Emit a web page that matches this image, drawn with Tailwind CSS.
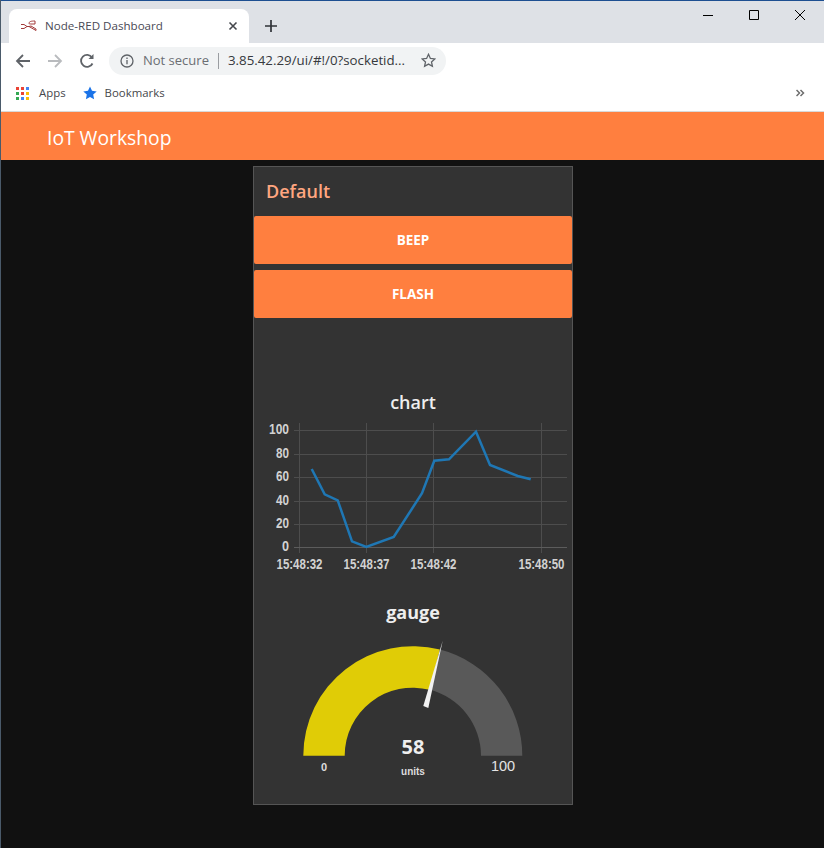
<!DOCTYPE html>
<html lang="en">
<head>
    <meta charset="UTF-8">
    <meta name="viewport" content="width=device-width, initial-scale=1.0">
    <title>Node-RED Dashboard</title>
    <script src="https://cdn.jsdelivr.net/npm/@tailwindcss/browser@4"></script>
</head>
<body class="bg-[#111111] font-['Open_Sans','Noto_Sans',sans-serif]">
<div class="w-[824px] h-[848px] flex flex-col overflow-hidden border-l border-[#4a5a6a]">

    <!-- Browser tabs -->
    <div class="h-[43px] shrink-0 bg-[#dee1e6] border-t border-[#1d4f91] flex items-end pl-[8px]">
        <div class="w-[240px] h-[34px] bg-white rounded-t-[8px] flex items-center pl-[12px] pr-[11px]">
            <svg class="w-[16px] h-[12px] shrink-0" viewBox="0 0 16 12" fill="none" stroke="#a33a3a" stroke-width="1">
                <path d="M0 4.500h3l3 2h2M0 8.500h3l3-2M8 3.500c0-2 2-2.500 6-2.500v3h-4c-1 0-2-.200-2-.500zM8 6.500l7 4v-1.500l-5-3z"/>
            </svg>
            <span class="ml-[8px] text-[11.6px] text-[#4a4a55] whitespace-nowrap">Node-RED Dashboard</span>
            <svg class="ml-auto w-[10px] h-[10px]" viewBox="0 0 10 10" stroke="#45484d" stroke-width="1.600"><path d="M1.500 1.500l7 7M8.500 1.500l-7 7"/></svg>
        </div>
        <svg class="ml-[15px] mb-[10px] w-[14px] h-[14px]" viewBox="0 0 14 14" stroke="#2f3237" stroke-width="1.700"><path d="M7 1v12M1 7h12"/></svg>
        <div class="ml-auto self-start flex items-center gap-[36px] pr-[19px] pt-[9px]">
            <svg class="w-[10px] h-[10px]" viewBox="0 0 10 10" stroke="#000" stroke-width="1"><path d="M0 5.500h10"/></svg>
            <svg class="w-[10px] h-[10px]" viewBox="0 0 10 10" fill="none" stroke="#000" stroke-width="1"><path d="M.500.500h9v9h-9z"/></svg>
            <svg class="w-[10px] h-[10px]" viewBox="0 0 10 10" stroke="#000" stroke-width="1"><path d="M0 0l10 10M10 0L0 10"/></svg>
        </div>
    </div>

    <!-- Toolbar -->
    <div class="h-[35px] shrink-0 bg-white flex items-center pl-[14px]">
        <svg class="w-[16px] h-[16px]" viewBox="0 0 16 16" fill="none" stroke="#5f6368" stroke-width="1.800"><path d="M15 8H2M8 2L2 8l6 6"/></svg>
        <svg class="ml-[16px] w-[16px] h-[16px]" viewBox="0 0 16 16" fill="none" stroke="#b9bbbe" stroke-width="1.800"><path d="M1 8h13M8 2l6 6-6 6"/></svg>
        <svg class="ml-[16px] w-[16px] h-[16px]" viewBox="0 0 16 16" fill="none" stroke="#5f6368" stroke-width="1.800"><path d="M13.500 10.500A6 6 0 1 1 13 4.500"/><path d="M14.500 1v5h-5" fill="#5f6368" stroke="none"/></svg>
        <div class="ml-[14px] w-[337px] h-[28px] rounded-full bg-[#f1f3f4] flex items-center pl-[11px] text-[13px] whitespace-nowrap">
            <svg class="w-[14px] h-[14px] shrink-0" viewBox="0 0 14 14" fill="none" stroke="#5f6368" stroke-width="1.300"><circle cx="7" cy="7" r="6"/><path d="M7 6v4.200M7 3.500v1.400"/></svg>
            <span class="ml-[9px] text-[#6b6e73]">Not secure</span>
            <span class="ml-[9px] w-px h-[16px] bg-[#9a9da1]"></span>
            <span class="ml-[9px] text-[13.300px] text-[#36393d]">3.85.42.29/ui/#!/0?socketid...</span>
            <svg class="ml-auto mr-[10px] w-[15px] h-[15px] shrink-0" viewBox="0 0 15 15" fill="none" stroke="#5f6368" stroke-width="1.300"><path d="M7.500 1.300l1.900 4.100 4.400.500-3.300 3 .9 4.400-3.900-2.200-3.900 2.200.9-4.400-3.300-3 4.400-.500z"/></svg>
        </div>
    </div>

    <!-- Bookmarks -->
    <div class="h-[33px] shrink-0 bg-white flex items-center pl-[15px] pr-[19px] pb-[3px] text-[11.400px] text-[#45474b]">
        <div class="grid grid-cols-3 gap-[2px] w-[13px]">
            <span class="h-[3px] bg-[#ea4335]"></span><span class="h-[3px] bg-[#ea4335]"></span><span class="h-[3px] bg-[#4285f4]"></span>
            <span class="h-[3px] bg-[#34a853]"></span><span class="h-[3px] bg-[#ea4335]"></span><span class="h-[3px] bg-[#fbbc05]"></span>
            <span class="h-[3px] bg-[#34a853]"></span><span class="h-[3px] bg-[#4285f4]"></span><span class="h-[3px] bg-[#fbbc05]"></span>
        </div>
        <span class="ml-[10px]">Apps</span>
        <svg class="ml-[17px] w-[14px] h-[14px]" viewBox="0 0 14 14" fill="#1a73e8"><path d="M7 .500l2 4.300 4.700.600-3.500 3.200.9 4.700L7 11l-4.100 2.300.9-4.700L.300 5.400 5 4.800z"/></svg>
        <span class="ml-[8px]">Bookmarks</span>
        <svg class="ml-auto w-[9px] h-[8px]" viewBox="0 0 9 8" fill="none" stroke="#6e6e6e" stroke-width="1.500"><path d="M.500 1l3 3-3 3M4.500 1l3 3-3 3"/></svg>
    </div>

    <!-- Dashboard header -->
    <div class="h-[49px] shrink-0 bg-[#ff7f3f] border-t border-[#d9d9d9] flex items-center pl-[46px] pt-[5px] text-[19.300px] text-white">IoT Workshop</div>

    <!-- Dashboard content -->
    <div class="flex-1 flex pt-[6px] pl-[252px]">
        <div class="w-[320px] h-[639px] bg-[#333333] border border-[#555555] flex flex-col">
            <div class="h-[49px] shrink-0 flex items-center pl-[12px] text-[18px] font-semibold text-[#ffa680]">Default</div>
            <div class="flex flex-col gap-[6px]">
                <button class="h-[48px] bg-[#ff7f3f] rounded-[2px] text-[13.500px] font-bold text-white">BEEP</button>
                <button class="h-[48px] bg-[#ff7f3f] rounded-[2px] text-[13.500px] font-bold text-white">FLASH</button>
            </div>

            <div class="mt-[71px] h-[26px] shrink-0 flex items-center justify-center text-[18px] font-semibold text-[#eeeeee]">chart</div>

            <!-- chart -->
            <svg class="shrink-0 mt-[5px]" width="318" height="160" viewBox="254 420 318 160" font-family="Liberation Sans" font-weight="bold" font-size="14" fill="#d2d2d2">
                <g stroke="#4d4d4d" stroke-width="1">
                    <path d="M294 430.500H567M294 454.500H567M294 477.500H567M294 501.500H567M294 524.500H567"/>
                    <path d="M299.500 423V553M366.500 423V553M433.500 423V553M541.500 423V553"/>
                </g>
                <path d="M294 547.500H567" stroke="#5c5c5c"/>
                <polyline fill="none" stroke="#1f77b4" stroke-width="2.500" points="311.700,469 324.700,494.300 337.700,500.300 352,541.300 366.300,547 393.700,537 422,493.300 434.300,460.700 449,459.300 476,431.700 490,465 517.700,476 530.700,479.300"/>
                <g text-anchor="end">
                    <text x="289" y="434" textLength="20" lengthAdjust="spacingAndGlyphs">100</text>
                    <text x="289" y="458" textLength="13" lengthAdjust="spacingAndGlyphs">80</text>
                    <text x="289" y="481" textLength="13" lengthAdjust="spacingAndGlyphs">60</text>
                    <text x="289" y="505" textLength="13" lengthAdjust="spacingAndGlyphs">40</text>
                    <text x="289" y="528" textLength="13" lengthAdjust="spacingAndGlyphs">20</text>
                    <text x="289" y="551" textLength="7" lengthAdjust="spacingAndGlyphs">0</text>
                </g>
                <g text-anchor="middle" font-size="11.500">
                    <text transform="translate(299.500 569) scale(1 1.200)">15:48:32</text>
                    <text transform="translate(366.500 569) scale(1 1.200)">15:48:37</text>
                    <text transform="translate(433.500 569) scale(1 1.200)">15:48:42</text>
                    <text transform="translate(541.500 569) scale(1 1.200)">15:48:50</text>
                </g>
            </svg>

            <div class="mt-[19px] h-[26px] shrink-0 flex items-center justify-center text-[18px] font-bold text-[#eeeeee]">gauge</div>

            <!-- gauge -->
            <svg class="shrink-0 mt-[1px]" width="318" height="175" viewBox="254 626 318 175">
                <path d="M303.300 755.700A109.500 109.500 0 0 1 440 649.600L429.700 689.800A68 68 0 0 0 344.700 755.700Z" fill="#e0cc06"/>
                <path d="M440 649.600A109.500 109.500 0 0 1 522.300 755.700H481A68 68 0 0 0 429.700 689.800Z" fill="#595959"/>
                <polygon points="442.700,640.700 423.300,706 428.300,708" fill="#f2f2f2"/>
                <text x="413" y="754" text-anchor="middle" font-family="Open Sans" font-weight="700" font-size="20" fill="#eeeeee">58</text>
                <text x="413" y="775" text-anchor="middle" font-family="Liberation Sans" font-weight="bold" font-size="10" fill="#dddddd">units</text>
                <text x="324" y="771" text-anchor="middle" font-family="Liberation Sans" font-weight="bold" font-size="11" fill="#dddddd">0</text>
                <text x="503" y="771" text-anchor="middle" font-family="Liberation Sans" font-size="14.500" fill="#e4e4e4">100</text>
            </svg>
        </div>
    </div>
</div>
</body>
</html>
